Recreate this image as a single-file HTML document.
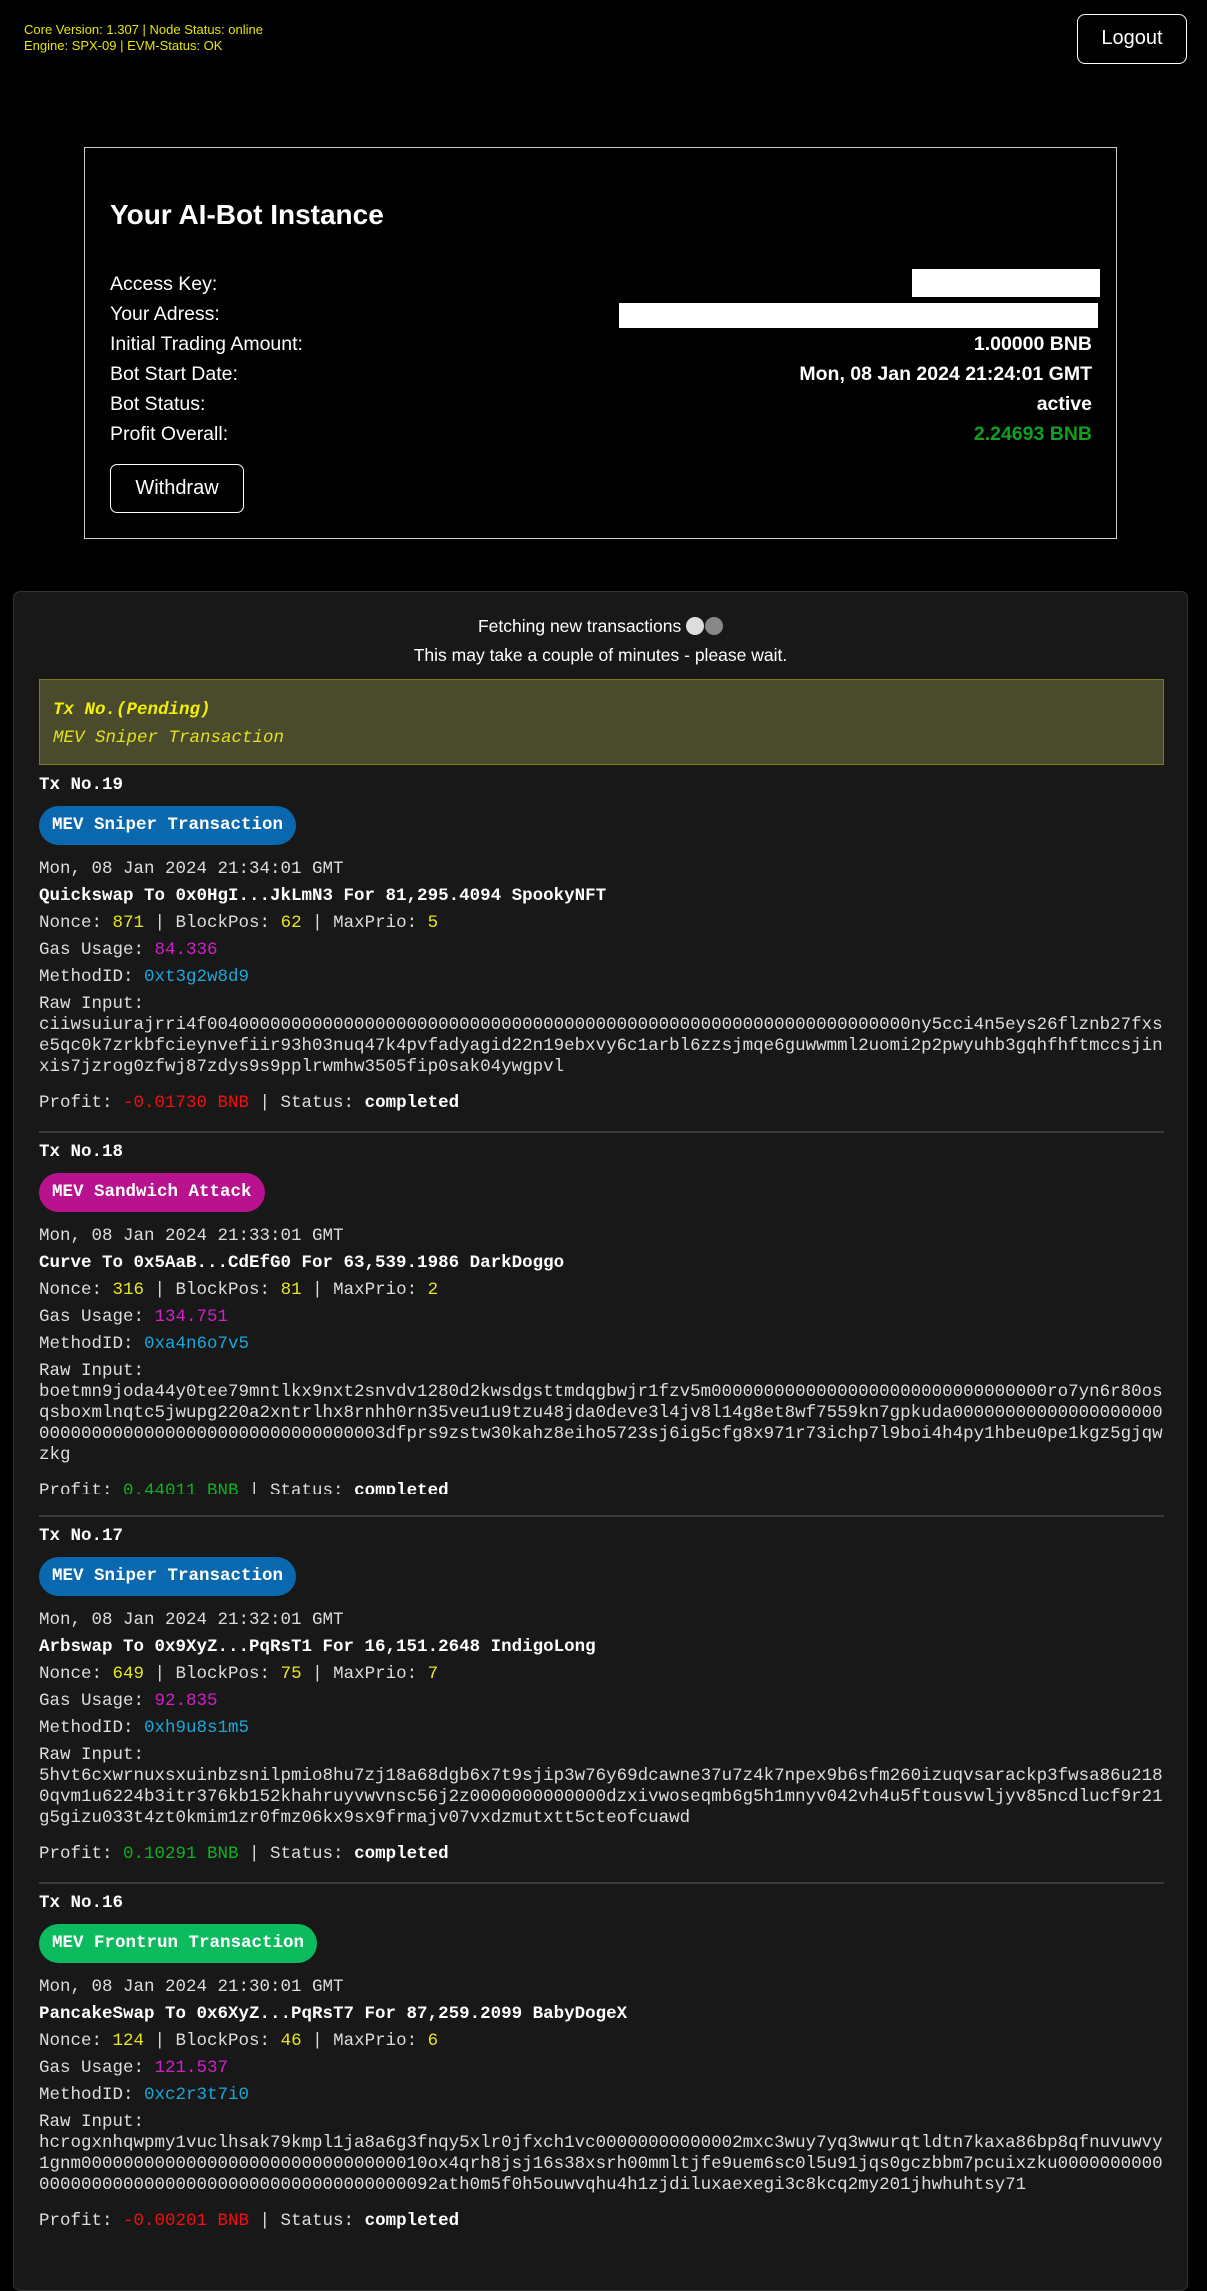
<!DOCTYPE html>
<html><head><meta charset="utf-8"><style>
*{margin:0;padding:0;box-sizing:border-box}
body{width:1207px;height:2231px;background:#000;color:#fff;font-family:"Liberation Sans",sans-serif;position:relative;overflow:hidden}
.hdr{position:absolute;left:24px;top:22px;color:#e6e600;font-size:13px;line-height:16px}
.logout{position:absolute;left:1077px;top:14px;width:110px;height:50px;border:1.5px solid #fff;border-radius:8px;font-size:20px;line-height:47px;text-align:center}
.card{position:absolute;left:84px;top:147px;width:1033px;height:392px;border:1.5px solid #ccc}
.card h1{position:absolute;left:25px;font-size:28px;font-weight:bold}
.row{position:absolute;left:25px;width:982px;height:30px;font-size:19.5px;line-height:30px}
.row .v{position:absolute;right:0;top:0;font-weight:bold}
.wb{position:absolute;background:#fff}
.wd{position:absolute;left:25px;top:316px;width:134px;height:49px;border:1.5px solid #fff;border-radius:7px;font-size:20px;line-height:46px;text-align:center}
.panel{position:absolute;left:13px;top:591px;width:1175px;height:1700px;background:#181818;border:1px solid #333;border-radius:7px}
.fetch{position:absolute;left:0;width:100%;text-align:center;font-size:17.5px}
.dot{display:inline-block;width:18px;height:18px;border-radius:50%;vertical-align:-3px}
.pend{position:absolute;left:25px;top:87px;width:1125px;height:86px;background:#4a4a2c;border:1px solid #7a7a18;font-family:"Liberation Mono",monospace;font-size:17.5px;padding-left:13px}
.txs{position:absolute;left:25px;top:182.5px;width:1125px;font-family:"Liberation Mono",monospace;font-size:17.5px;line-height:21px;color:#ddd}
.tx{overflow:hidden}
.tn{font-weight:bold;color:#fff}
.b{display:inline-block;margin-top:10.5px;height:39px;line-height:39px;padding:0 13px;border-radius:20px;font-weight:bold;color:#fff}
.d{margin-top:13.5px}
.l{margin-top:6px}
.sw{font-weight:bold;color:#fff}
.y{color:#e6e620}.m{color:#d020c8}.c{color:#1aa8d8}.r{color:#f01010}.g{color:#10b020}
.raw{margin-top:6px;word-break:break-all}
.pr{margin-top:15px}
.st{font-weight:bold;color:#fff}
.sep{height:2px;background:#3a3a3a;margin-top:17px;margin-bottom:9px}
</style></head><body>
<div class="hdr">Core Version: 1.307 | Node Status: online<br>Engine: SPX-09 | EVM-Status: OK</div>
<div class="logout">Logout</div>
<div class="card">
<h1 style="top:51px">Your AI-Bot Instance</h1>
<div class="row" style="top:121px">Access Key:</div>
<div class="wb" style="left:827px;top:121px;width:188px;height:28px"></div>
<div class="row" style="top:151px">Your Adress:</div>
<div class="wb" style="left:534px;top:155px;width:479px;height:25px"></div>
<div class="row" style="top:181px">Initial Trading Amount:<span class="v">1.00000 BNB</span></div>
<div class="row" style="top:211px">Bot Start Date:<span class="v">Mon, 08 Jan 2024 21:24:01 GMT</span></div>
<div class="row" style="top:241px">Bot Status:<span class="v">active</span></div>
<div class="row" style="top:271px">Profit Overall:<span class="v" style="color:#10a020">2.24693 BNB</span></div>
<div class="wd">Withdraw</div>
</div>
<div class="panel">
<div class="fetch" style="top:24px">Fetching new transactions <span class="dot" style="background:#ddd"></span> <span class="dot" style="background:#888;margin-left:-4px"></span></div>
<div class="fetch" style="top:53px">This may take a couple of minutes - please wait.</div>
<div class="pend">
<div style="position:absolute;top:20px;left:13px;color:#f0f000;font-weight:bold;font-style:italic">Tx No.(Pending)</div>
<div style="position:absolute;top:48px;left:13px;color:#e0e020;font-style:italic">MEV Sniper Transaction</div>
</div>
<div class="txs">
<div class="tx">
<div class="tn">Tx No.19</div>
<div class="b" style="background:#0a68ae">MEV Sniper Transaction</div>
<div class="d">Mon, 08 Jan 2024 21:34:01 GMT</div>
<div class="l sw">Quickswap To 0x0HgI...JkLmN3 For 81,295.4094 SpookyNFT</div>
<div class="l">Nonce: <span class="y">871</span> | BlockPos: <span class="y">62</span> | MaxPrio: <span class="y">5</span></div>
<div class="l">Gas Usage: <span class="m">84.336</span></div>
<div class="l">MethodID: <span class="c">0xt3g2w8d9</span></div>
<div class="raw">Raw Input:<br>ciiwsuiurajrri4f0040000000000000000000000000000000000000000000000000000000000000000ny5cci4n5eys26flznb27fxs<br>e5qc0k7zrkbfcieynvefiir93h03nuq47k4pvfadyagid22n19ebxvy6c1arbl6zzsjmqe6guwwmml2uomi2p2pwyuhb3gqhfhftmccsjin<br>xis7jzrog0zfwj87zdys9s9pplrwmhw3505fip0sak04ywgpvl</div>
<div class="pr">Profit: <span class="r">-0.01730 BNB</span> | Status: <span class="st">completed</span></div>
</div>
<div class="sep"></div>
<div class="tx" style="height:352px">
<div class="tn">Tx No.18</div>
<div class="b" style="background:#b8128f">MEV Sandwich Attack</div>
<div class="d">Mon, 08 Jan 2024 21:33:01 GMT</div>
<div class="l sw">Curve To 0x5AaB...CdEfG0 For 63,539.1986 DarkDoggo</div>
<div class="l">Nonce: <span class="y">316</span> | BlockPos: <span class="y">81</span> | MaxPrio: <span class="y">2</span></div>
<div class="l">Gas Usage: <span class="m">134.751</span></div>
<div class="l">MethodID: <span class="c">0xa4n6o7v5</span></div>
<div class="raw">Raw Input:<br>boetmn9joda44y0tee79mntlkx9nxt2snvdv1280d2kwsdgsttmdqgbwjr1fzv5m00000000000000000000000000000000ro7yn6r80osqsboxmlnqtc5jwupg220a2xntrlhx8rnhh0rn35veu1u9tzu48jda0deve3l4jv8l14g8et8wf7559kn7gpkuda00000000000000000000000000000000000000000000000000003dfprs9zstw30kahz8eiho5723sj6ig5cfg8x971r73ichp7l9boi4h4py1hbeu0pe1kgz5gjqwzkg</div>
<div class="pr">Profit: <span class="g">0.44011 BNB</span> | Status: <span class="st">completed</span></div>
</div>
<div class="sep" style="margin-top:21px"></div>
<div class="tx">
<div class="tn">Tx No.17</div>
<div class="b" style="background:#0a68ae">MEV Sniper Transaction</div>
<div class="d">Mon, 08 Jan 2024 21:32:01 GMT</div>
<div class="l sw">Arbswap To 0x9XyZ...PqRsT1 For 16,151.2648 IndigoLong</div>
<div class="l">Nonce: <span class="y">649</span> | BlockPos: <span class="y">75</span> | MaxPrio: <span class="y">7</span></div>
<div class="l">Gas Usage: <span class="m">92.835</span></div>
<div class="l">MethodID: <span class="c">0xh9u8s1m5</span></div>
<div class="raw">Raw Input:<br>5hvt6cxwrnuxsxuinbzsnilpmio8hu7zj18a68dgb6x7t9sjip3w76y69dcawne37u7z4k7npex9b6sfm260izuqvsarackp3fwsa86u2180qvm1u6224b3itr376kb152khahruyvwvnsc56j2z0000000000000dzxivwoseqmb6g5h1mnyv042vh4u5ftousvwljyv85ncdlucf9r21g5gizu033t4zt0kmim1zr0fmz06kx9sx9frmajv07vxdzmutxtt5cteofcuawd</div>
<div class="pr">Profit: <span class="g">0.10291 BNB</span> | Status: <span class="st">completed</span></div>
</div>
<div class="sep"></div>
<div class="tx">
<div class="tn">Tx No.16</div>
<div class="b" style="background:#0dbb5f">MEV Frontrun Transaction</div>
<div class="d">Mon, 08 Jan 2024 21:30:01 GMT</div>
<div class="l sw">PancakeSwap To 0x6XyZ...PqRsT7 For 87,259.2099 BabyDogeX</div>
<div class="l">Nonce: <span class="y">124</span> | BlockPos: <span class="y">46</span> | MaxPrio: <span class="y">6</span></div>
<div class="l">Gas Usage: <span class="m">121.537</span></div>
<div class="l">MethodID: <span class="c">0xc2r3t7i0</span></div>
<div class="raw">Raw Input:<br>hcrogxnhqwpmy1vuclhsak79kmpl1ja8a6g3fnqy5xlr0jfxch1vc00000000000002mxc3wuy7yq3wwurqtldtn7kaxa86bp8qfnuvuwvy1gnm000000000000000000000000000000010ox4qrh8jsj16s38xsrh00mmltjfe9uem6sc0l5u91jqs0gczbbm7pcuixzku000000000000000000000000000000000000000000000092ath0m5f0h5ouwvqhu4h1zjdiluxaexegi3c8kcq2my201jhwhuhtsy71</div>
<div class="pr">Profit: <span class="r">-0.00201 BNB</span> | Status: <span class="st">completed</span></div>
</div>
</div>
</div>
</body></html>
